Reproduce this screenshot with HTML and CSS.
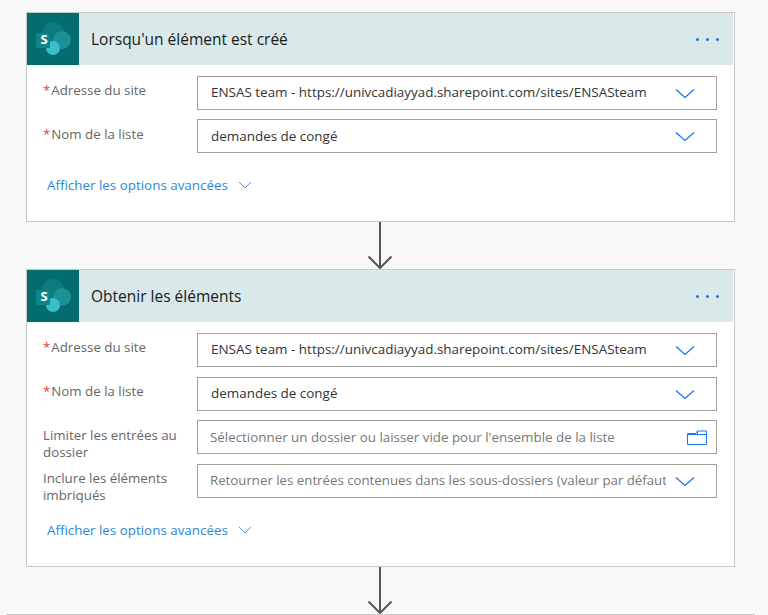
FILE: index.html
```html
<!doctype html>
<html lang="fr">
    <head>
        <meta charset="utf-8">
        <meta name="viewport" content="width=device-width, initial-scale=1">
        <title>Flux - SharePoint</title>
        <link rel="stylesheet" href="styles.css">
    </head>
    <body>
        <main class="flux">
            <section class="carte carte-courte">
                <header class="entete">
                    <div class="logo">
                        <svg width="36" height="36" viewBox="0 0 36 36"><circle cx="18" cy="12" r="11" fill="#0b7b80"/><circle cx="27" cy="19" r="9" fill="#1a9097"/><circle cx="18" cy="27" r="7" fill="#37c0cb"/><rect x="1" y="12" width="14" height="15" rx="1" fill="#0f8488"/><text x="9" y="23.4" class="logo-s">S</text></svg>
                    </div>
                    <h2 class="titre">Lorsqu'un élément est créé</h2>
                    <div class="points"><span></span><span></span><span></span></div>
                </header>
                <div class="champs">
                    <div class="champ">
                        <label class="libelle"><span class="requis">*</span>Adresse du site</label>
                        <div class="saisie"><span class="valeur">ENSAS team - https://univcadiayyad.sharepoint.com/sites/ENSASteam</span>
                            <svg class="chevron" width="20" height="11" viewBox="0 0 20 11"><path d="M1 1.5l9 8 9-8"/></svg></div>
                    </div>
                    <div class="champ">
                        <label class="libelle libelle-bas"><span class="requis">*</span>Nom de la liste</label>
                        <div class="saisie"><span class="valeur">demandes de congé</span>
                            <svg class="chevron" width="20" height="11" viewBox="0 0 20 11"><path d="M1 1.5l9 8 9-8"/></svg></div>
                    </div>
                </div>
                <a class="options" href="#">Afficher les options avancées
                    <svg width="14" height="8" viewBox="0 0 14 8"><path d="M1 1l6 6 6-6"/></svg></a>
            </section>

            <div class="fleche"><svg width="24" height="47" viewBox="0 0 24 47"><path d="M12 0v46M.5 34.500L12 46l11.500-11.500"/></svg></div>

            <section class="carte carte-longue">
                <header class="entete">
                    <div class="logo">
                        <svg width="36" height="36" viewBox="0 0 36 36"><circle cx="18" cy="12" r="11" fill="#0b7b80"/><circle cx="27" cy="19" r="9" fill="#1a9097"/><circle cx="18" cy="27" r="7" fill="#37c0cb"/><rect x="1" y="12" width="14" height="15" rx="1" fill="#0f8488"/><text x="9" y="23.4" class="logo-s">S</text></svg>
                    </div>
                    <h2 class="titre">Obtenir les éléments</h2>
                    <div class="points"><span></span><span></span><span></span></div>
                </header>
                <div class="champs">
                    <div class="champ">
                        <label class="libelle"><span class="requis">*</span>Adresse du site</label>
                        <div class="saisie"><span class="valeur">ENSAS team - https://univcadiayyad.sharepoint.com/sites/ENSASteam</span>
                            <svg class="chevron" width="20" height="11" viewBox="0 0 20 11"><path d="M1 1.5l9 8 9-8"/></svg></div>
                    </div>
                    <div class="champ champ-decale">
                        <label class="libelle"><span class="requis">*</span>Nom de la liste</label>
                        <div class="saisie"><span class="valeur">demandes de congé</span>
                            <svg class="chevron" width="20" height="11" viewBox="0 0 20 11"><path d="M1 1.5l9 8 9-8"/></svg></div>
                    </div>
                    <div class="champ">
                        <label class="libelle libelle-bas">Limiter les entrées au dossier</label>
                        <div class="saisie saisie-vide"><span class="valeur">Sélectionner un dossier ou laisser vide pour l'ensemble de la liste</span>
                            <svg class="dossier" width="20" height="15" viewBox="0 0 20 15"><path d="M.5 4.500h19v10H.5zM.5 4.500l0-1h8l2-2.500h9v4M10.500 1v3.500"/></svg></div>
                    </div>
                    <div class="champ champ-decale">
                        <label class="libelle">Inclure les éléments imbriqués</label>
                        <div class="saisie saisie-vide saisie-longue"><span class="valeur">Retourner les entrées contenues dans les sous-dossiers (valeur par défaut)</span>
                            <svg class="chevron" width="20" height="11" viewBox="0 0 20 11"><path d="M1 1.5l9 8 9-8"/></svg></div>
                    </div>
                </div>
                <a class="options" href="#">Afficher les options avancées
                    <svg width="14" height="8" viewBox="0 0 14 8"><path d="M1 1l6 6 6-6"/></svg></a>
            </section>

            <div class="fleche"><svg width="24" height="47" viewBox="0 0 24 47"><path d="M12 0v46M.5 34.500L12 46l11.500-11.500"/></svg></div>
        </main>
        <div class="ligne-bas"></div>
    </body>
</html>
```

FILE: styles.css
```css
:root {
    --bleu: #1a73f0;
    --lien: #2b88d8;
    --bord-carte: #c8c8c8;
    --bord-saisie: #a0a0a0;
}

html, body {
    height: 100%;
}

body {
    margin: 0;
    background-color: #f8f8f8;
    font-family: "Open Sans", "Noto Sans", sans-serif;
    overflow: hidden;
    position: relative;
}

.flux {
    width: 709px;
    margin-left: 26px;
    padding-top: 12px;
}

.carte {
    background-color: white;
    border: 1px solid var(--bord-carte);
    box-sizing: border-box;
}

.carte-courte {
    height: 210px;
}

.carte-longue {
    height: 298px;
}

.entete {
    display: flex;
    align-items: center;
    height: 52px;
    margin-right: 1px;
    background-color: #d9e8e8;
}

.logo {
    width: 52px;
    height: 52px;
    background-color: #036c70;
    display: flex;
    align-items: center;
    justify-content: center;
    flex-shrink: 0;
}

.logo-s {
    font-family: "Open Sans", sans-serif;
    font-weight: 700;
    font-size: 13px;
    fill: white;
    text-anchor: middle;
}

.titre {
    margin: 0 0 0 12px;
    flex: 1;
    font-size: 15.5px;
    font-weight: 400;
    color: #1a1a1a;
}

.points {
    display: flex;
    gap: 7px;
    margin-right: 14px;
    margin-top: 1px;
}

.points span {
    width: 3px;
    height: 3px;
    border-radius: 50%;
    background-color: var(--bleu);
}

.champs {
    padding: 11px 17px 0 16px;
    display: flex;
    flex-direction: column;
    gap: 9px;
}

.champ {
    display: flex;
    height: 34px;
}

.champ-decale {
    margin-top: 1px;
}

.libelle {
    width: 154px;
    flex-shrink: 0;
    font-size: 13.3px;
    line-height: 17px;
    padding-top: 6px;
    padding-right: 10px;
    box-sizing: border-box;
    color: #666;
}

.libelle-bas {
    padding-top: 7px;
}

.requis {
    color: #e03c31;
    margin-right: 1px;
}

.saisie {
    flex: 1;
    height: 34px;
    box-sizing: border-box;
    border: 1px solid var(--bord-saisie);
    display: flex;
    align-items: center;
    padding: 0 21px 0 13px;
    gap: 9px;
    min-width: 0;
    background-color: white;
}

.saisie-vide {
    padding-left: 12px;
}

.valeur {
    flex: 1;
    min-width: 0;
    margin-bottom: 2px;
    font-size: 13.44px;
    color: #333;
    white-space: nowrap;
    overflow: hidden;
}

.libelle-bas + .saisie .valeur {
    margin-bottom: 0;
}

.saisie-vide .valeur {
    font-size: 13.37px;
    color: #777;
}

.saisie-longue .valeur {
    font-size: 13.25px;
}

.chevron, .options svg {
    fill: none;
    stroke: var(--bleu);
    stroke-width: 1.3;
    flex-shrink: 0;
}

.dossier {
    fill: none;
    stroke: var(--bleu);
    stroke-width: 1;
    flex-shrink: 0;
    margin-right: -12px;
}

.options {
    display: inline-flex;
    align-items: center;
    gap: 10px;
    margin: 23px 0 0 20px;
    font-size: 13.4px;
    line-height: 18px;
    color: var(--lien);
    text-decoration: none;
}

.options svg {
    stroke: #5a94e0;
    stroke-width: 1;
}

.fleche {
    display: flex;
    justify-content: center;
    height: 47px;
}

.fleche svg {
    margin-right: 2px;
    fill: none;
    stroke: #555;
    stroke-width: 2;
}

.ligne-bas {
    position: absolute;
    left: 6px;
    right: 13px;
    top: 614px;
    height: 1px;
    background-color: #c8c8c8;
}
```
